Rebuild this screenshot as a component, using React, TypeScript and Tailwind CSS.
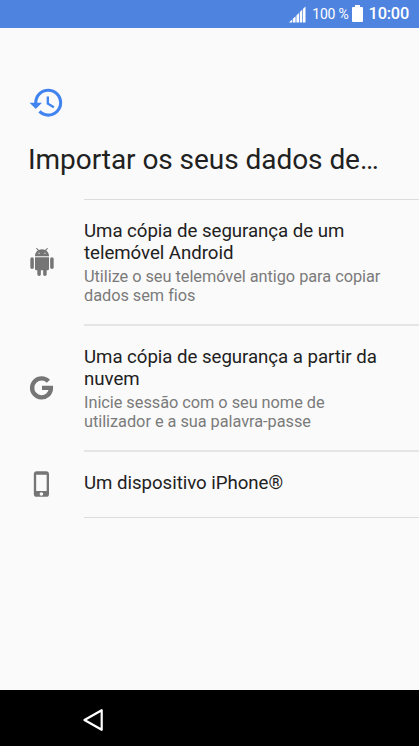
import type { ReactNode } from 'react';
import { MdHistory, MdPhoneIphone } from 'react-icons/md';
import { clsx } from 'clsx';

function SignalIcon() {
  return (
    <svg width="17" height="17" viewBox="0 0 17 17" fill="white">
      <path d="M0 16.5L3.2 13.5V16.5ZM3.9 12.8L6.6 10.2V16.5H3.9ZM7.4 9.4L10 6.9V16.5H7.4ZM10.8 6.1L13.2 3.8V16.5H10.8ZM13.9 3.1L16.5 0.5V16.5H13.9Z" />
    </svg>
  );
}

function BatteryIcon() {
  return (
    <svg width="11" height="17" viewBox="0 0 11 17" fill="white">
      <path d="M3 0h5v2h2q1 0 1 1v13q0 1-1 1H1q-1 0-1-1V3q0-1 1-1h2z" />
    </svg>
  );
}

function AndroidIcon() {
  return (
    <svg width="28" height="28" viewBox="0 0 24 24" fill="currentColor">
      <path d="M6 18c0 .55.45 1 1 1h1v3.5c0 .83.67 1.5 1.5 1.5s1.5-.67 1.5-1.5V19h2v3.5c0 .83.67 1.5 1.5 1.5s1.5-.67 1.5-1.5V19h1c.55 0 1-.45 1-1V8H6v10zM3.5 8C2.67 8 2 8.67 2 9.5v7c0 .83.67 1.5 1.5 1.5S5 17.33 5 16.5v-7C5 8.67 4.33 8 3.5 8zm17 0c-.83 0-1.5.67-1.5 1.5v7c0 .83.67 1.5 1.5 1.5s1.5-.67 1.5-1.5v-7c0-.83-.67-1.5-1.5-1.5zm-4.97-5.84l1.3-1.3c.2-.2.2-.51 0-.71-.2-.2-.51-.2-.71 0l-1.48 1.48C13.85 1.23 12.95 1 12 1c-.96 0-1.86.23-2.66.63L7.85.15c-.2-.2-.51-.2-.71 0-.2.2-.2.51 0 .71l1.31 1.31C6.97 3.26 6 5.01 6 7h12c0-1.99-.97-3.75-2.47-4.84zM10 5H9V4h1v1zm5 0h-1V4h1v1z" />
    </svg>
  );
}

function GoogleIcon() {
  return (
    <svg width="28" height="28" viewBox="0 0 28 28" fill="none" stroke="currentColor" strokeWidth="4.4">
      <path d="M20.4 7.2A9.5 9.5 0 1 0 20 20.9C22 19 23 16.4 22.9 13.9H14" />
    </svg>
  );
}

interface OptionProps {
  icon: ReactNode;
  title: string;
  description?: string;
}

function Option({ icon, title, description }: OptionProps) {
  return (
    <button className="flex w-full items-stretch pl-7 text-left">
      <span className="flex w-14 shrink-0 items-center pb-0.5 text-[#757575]">{icon}</span>
      <span
        className={clsx(
          'flex flex-1 flex-col justify-center pr-7',
          description
            ? 'h-[126px] border-b-2 border-[#e5e5e5]'
            : 'h-[66px] border-b border-[#dcdcdc] pb-[3px]'
        )}
      >
        <span className="text-[18.67px] leading-[22px] tracking-[-0.04px] text-[#212121]">{title}</span>
        {description && (
          <span className="mt-[3px] text-[16.33px] leading-[19px] tracking-[-0.04px] text-[#7b7b7b]">
            {description}
          </span>
        )}
      </span>
    </button>
  );
}

export default function App() {
  return (
    <div className="flex h-[746px] w-[419px] flex-col overflow-hidden bg-[#fafafa] font-['Roboto',sans-serif]">
      <header className="flex h-7 shrink-0 items-center justify-end bg-[#4e83e0] pr-[10px] text-white">
        <SignalIcon />
        <span className="ml-[6px] text-[14px] tracking-[-0.2px]">100 %</span>
        <span className="ml-[3px] pb-px">
          <BatteryIcon />
        </span>
        <span className="ml-[6px] text-[16.33px] font-medium tracking-[-0.2px]">10:00</span>
      </header>

      <main className="flex-1 pt-14">
        <div className="px-7">
          <MdHistory size={37.3} className="text-[#4284ef]" />
          <h1 className="mt-[22px] text-[28px] leading-[33px] tracking-[-0.05px] whitespace-nowrap text-[#212121]">
            Importar os seus dados de…
          </h1>
        </div>
        <div className="mt-[23px] ml-21 border-b border-[#dcdcdc]" />
        <Option
          icon={<AndroidIcon />}
          title="Uma cópia de segurança de um telemóvel Android"
          description="Utilize o seu telemóvel antigo para copiar dados sem fios"
        />
        <Option
          icon={<GoogleIcon />}
          title="Uma cópia de segurança a partir da nuvem"
          description="Inicie sessão com o seu nome de utilizador e a sua palavra-passe"
        />
        <Option icon={<MdPhoneIphone size={28} />} title="Um dispositivo iPhone®" />
      </main>

      <nav className="flex h-14 shrink-0 items-center bg-black pt-1 pl-[83px]">
        <svg width="21" height="24" viewBox="0 0 21 24" fill="none" stroke="white" strokeWidth="2.2" strokeLinejoin="round">
          <path d="M1.5 12L18.7 2.2V21.8Z" />
        </svg>
      </nav>
    </div>
  );
}
